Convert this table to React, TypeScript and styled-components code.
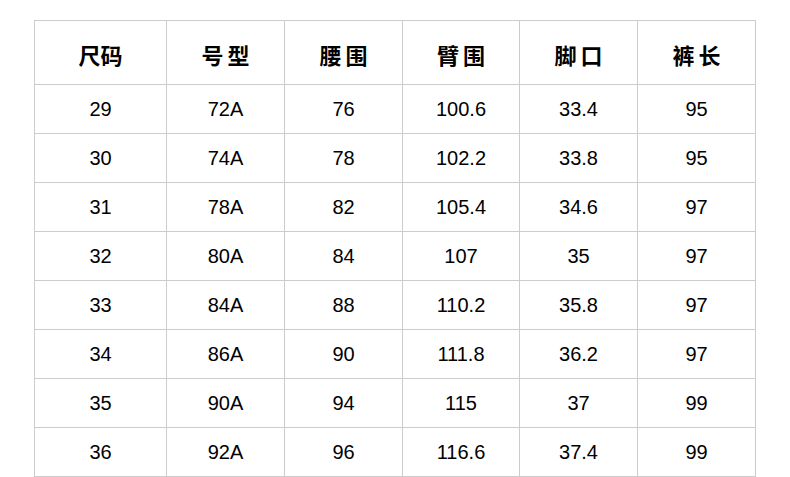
import styled, { createGlobalStyle } from "styled-components";

const GlobalStyle = createGlobalStyle`
  html, body {
    margin: 0;
    padding: 0;
    background: #fff;
  }
`;

const Page = styled.div`
  width: 790px;
  padding-top: 20px;
  display: flex;
  justify-content: center;
`;

const Table = styled.table`
  border-collapse: collapse;
  width: 722px;
  table-layout: fixed;
  color: #000;
`;

const Th = styled.th<{ $spaced?: boolean }>`
  height: 60px;
  padding: 3px 0 0;
  border: 1px solid #cccccc;
  font-family: "Noto Sans CJK SC", "Liberation Sans", sans-serif;
  font-size: 22px;
  font-weight: 700;
  letter-spacing: ${(p) => (p.$spaced ? "4px" : "0")};
  text-indent: ${(p) => (p.$spaced ? "4px" : "0")};
  text-align: center;
`;

const Td = styled.td`
  height: 48px;
  padding: 0;
  border: 1px solid #cccccc;
  font-family: "Liberation Sans", Arial, sans-serif;
  font-size: 20px;
  text-align: center;
`;

const headers = [
  { label: "尺码", spaced: false, width: 132 },
  { label: "号型", spaced: true, width: 118 },
  { label: "腰围", spaced: true, width: 118 },
  { label: "臂围", spaced: true, width: 117 },
  { label: "脚口", spaced: true, width: 118 },
  { label: "裤长", spaced: true, width: 118 },
];

const rows = [
  ["29", "72A", "76", "100.6", "33.4", "95"],
  ["30", "74A", "78", "102.2", "33.8", "95"],
  ["31", "78A", "82", "105.4", "34.6", "97"],
  ["32", "80A", "84", "107", "35", "97"],
  ["33", "84A", "88", "110.2", "35.8", "97"],
  ["34", "86A", "90", "111.8", "36.2", "97"],
  ["35", "90A", "94", "115", "37", "99"],
  ["36", "92A", "96", "116.6", "37.4", "99"],
];

export default function App() {
  return (
    <>
      <GlobalStyle />
      <Page>
        <Table>
          <colgroup>
            {headers.map((h) => (
              <col key={h.label} style={{ width: h.width }} />
            ))}
          </colgroup>
          <thead>
            <tr>
              {headers.map((h) => (
                <Th key={h.label} $spaced={h.spaced}>
                  {h.label}
                </Th>
              ))}
            </tr>
          </thead>
          <tbody>
            {rows.map((r) => (
              <tr key={r[0]}>
                {r.map((c, i) => (
                  <Td key={i}>{c}</Td>
                ))}
              </tr>
            ))}
          </tbody>
        </Table>
      </Page>
    </>
  );
}
